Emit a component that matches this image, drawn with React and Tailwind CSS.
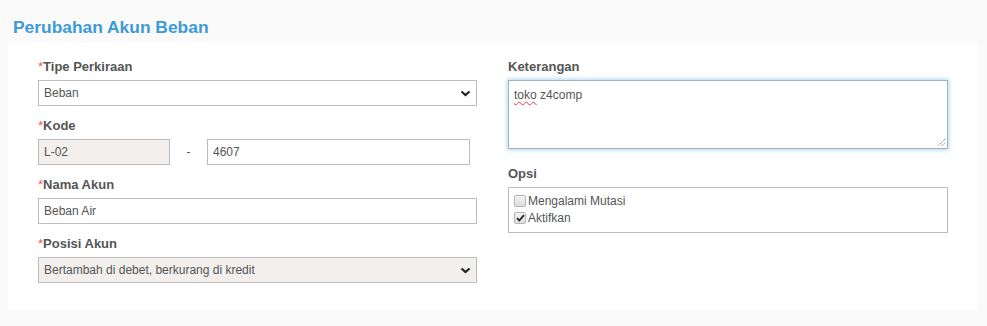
import React from "react";

const Label = ({ children, required }) => (
  <label className="block text-[13px] leading-[17px] font-bold text-[#555] mb-[5px]">
    {required && <span className="text-[#e4605e] font-normal">*</span>}
    {children}
  </label>
);

const Chevron = () => (
  <svg width="11" height="7" viewBox="0 0 11 7" className="shrink-0">
    <path d="M1.5 1.5l4 3.5 4-3.5" fill="none" stroke="#222" strokeWidth="2.2" />
  </svg>
);

const Select = ({ value, disabled }) => (
  <div
    className={`h-[26px] border border-[#bcbcbc] flex items-center justify-between pl-[5px] pr-[5px] text-[12px] text-[#555] ${
      disabled ? "bg-[#f2efec]" : "bg-white"
    }`}
  >
    <span>{value}</span>
    <Chevron />
  </div>
);

const Input = ({ value, className = "" }) => (
  <div
    className={`h-[26px] border border-[#bcbcbc] flex items-center px-[5px] text-[12px] text-[#555] ${className}`}
  >
    {value}
  </div>
);

const Check = ({ checked, label }) => (
  <div className="flex items-center h-[17px]">
    <span className="w-[12px] h-[12px] rounded-[2px] border border-[#b4b4b4] bg-gradient-to-b from-[#f4f4f4] to-[#dedede] flex items-center justify-center mr-[2px]">
      {checked && (
        <svg width="9" height="8" viewBox="0 0 9 8">
          <path d="M1 4.2l2.3 2.3L8 1.2" fill="none" stroke="#222" strokeWidth="1.8" />
        </svg>
      )}
    </span>
    <span className="text-[12px] text-[#555]">{label}</span>
  </div>
);

export default function App() {
  return (
    <div
      className="min-h-[326px] bg-[#fafafa] pt-[15px]"
      style={{ fontFamily: '"Liberation Sans", Arial, sans-serif' }}
    >
      <h1 className="pl-[13px] text-[17.4px] leading-[24px] font-bold text-[#3c9ad7]">
        Perubahan Akun Beban
      </h1>
      <div className="ml-[8px] mr-[9px] mt-[4px] bg-white pt-[15px] pb-[27px] pl-[30px] flex gap-[31px]">
        <div className="w-[439px] shrink-0 flex flex-col gap-[11px]">
          <div>
            <Label required>Tipe Perkiraan</Label>
            <Select value="Beban" />
          </div>
          <div>
            <Label required>Kode</Label>
            <div className="flex items-center">
              <Input value="L-02" className="w-[132px] bg-[#f2efec]" />
              <span className="w-[37px] text-center text-[12px] text-[#555]">-</span>
              <Input value="4607" className="w-[263px] bg-white" />
            </div>
          </div>
          <div>
            <Label required>Nama Akun</Label>
            <Input value="Beban Air" className="bg-white" />
          </div>
          <div>
            <Label required>Posisi Akun</Label>
            <Select value="Bertambah di debet, berkurang di kredit" disabled />
          </div>
        </div>
        <div className="w-[440px] shrink-0 flex flex-col gap-[16px]">
          <div>
            <Label>Keterangan</Label>
            <div className="relative h-[69px] border border-[#9fb3c2] shadow-[0_0_4px_1px_rgba(110,180,230,0.55)] bg-white px-[5px] pt-[5px] text-[12px] text-[#555]">
              <span className="underline decoration-wavy decoration-[#e34] decoration-1 underline-offset-2">toko</span>{" "}
              z4comp
              <svg width="9" height="9" viewBox="0 0 9 9" className="absolute right-[1px] bottom-[1px]">
                <path d="M8 1L1 8M8 4.5L4.5 8" stroke="#666" strokeWidth="1" strokeDasharray="1 1" />
              </svg>
            </div>
          </div>
          <div>
            <Label>Opsi</Label>
            <div className="h-[46px] border border-[#bcbcbc] pl-[5px] pt-[4px]">
              <Check label="Mengalami Mutasi" />
              <Check checked label="Aktifkan" />
            </div>
          </div>
        </div>
      </div>
    </div>
  );
}
